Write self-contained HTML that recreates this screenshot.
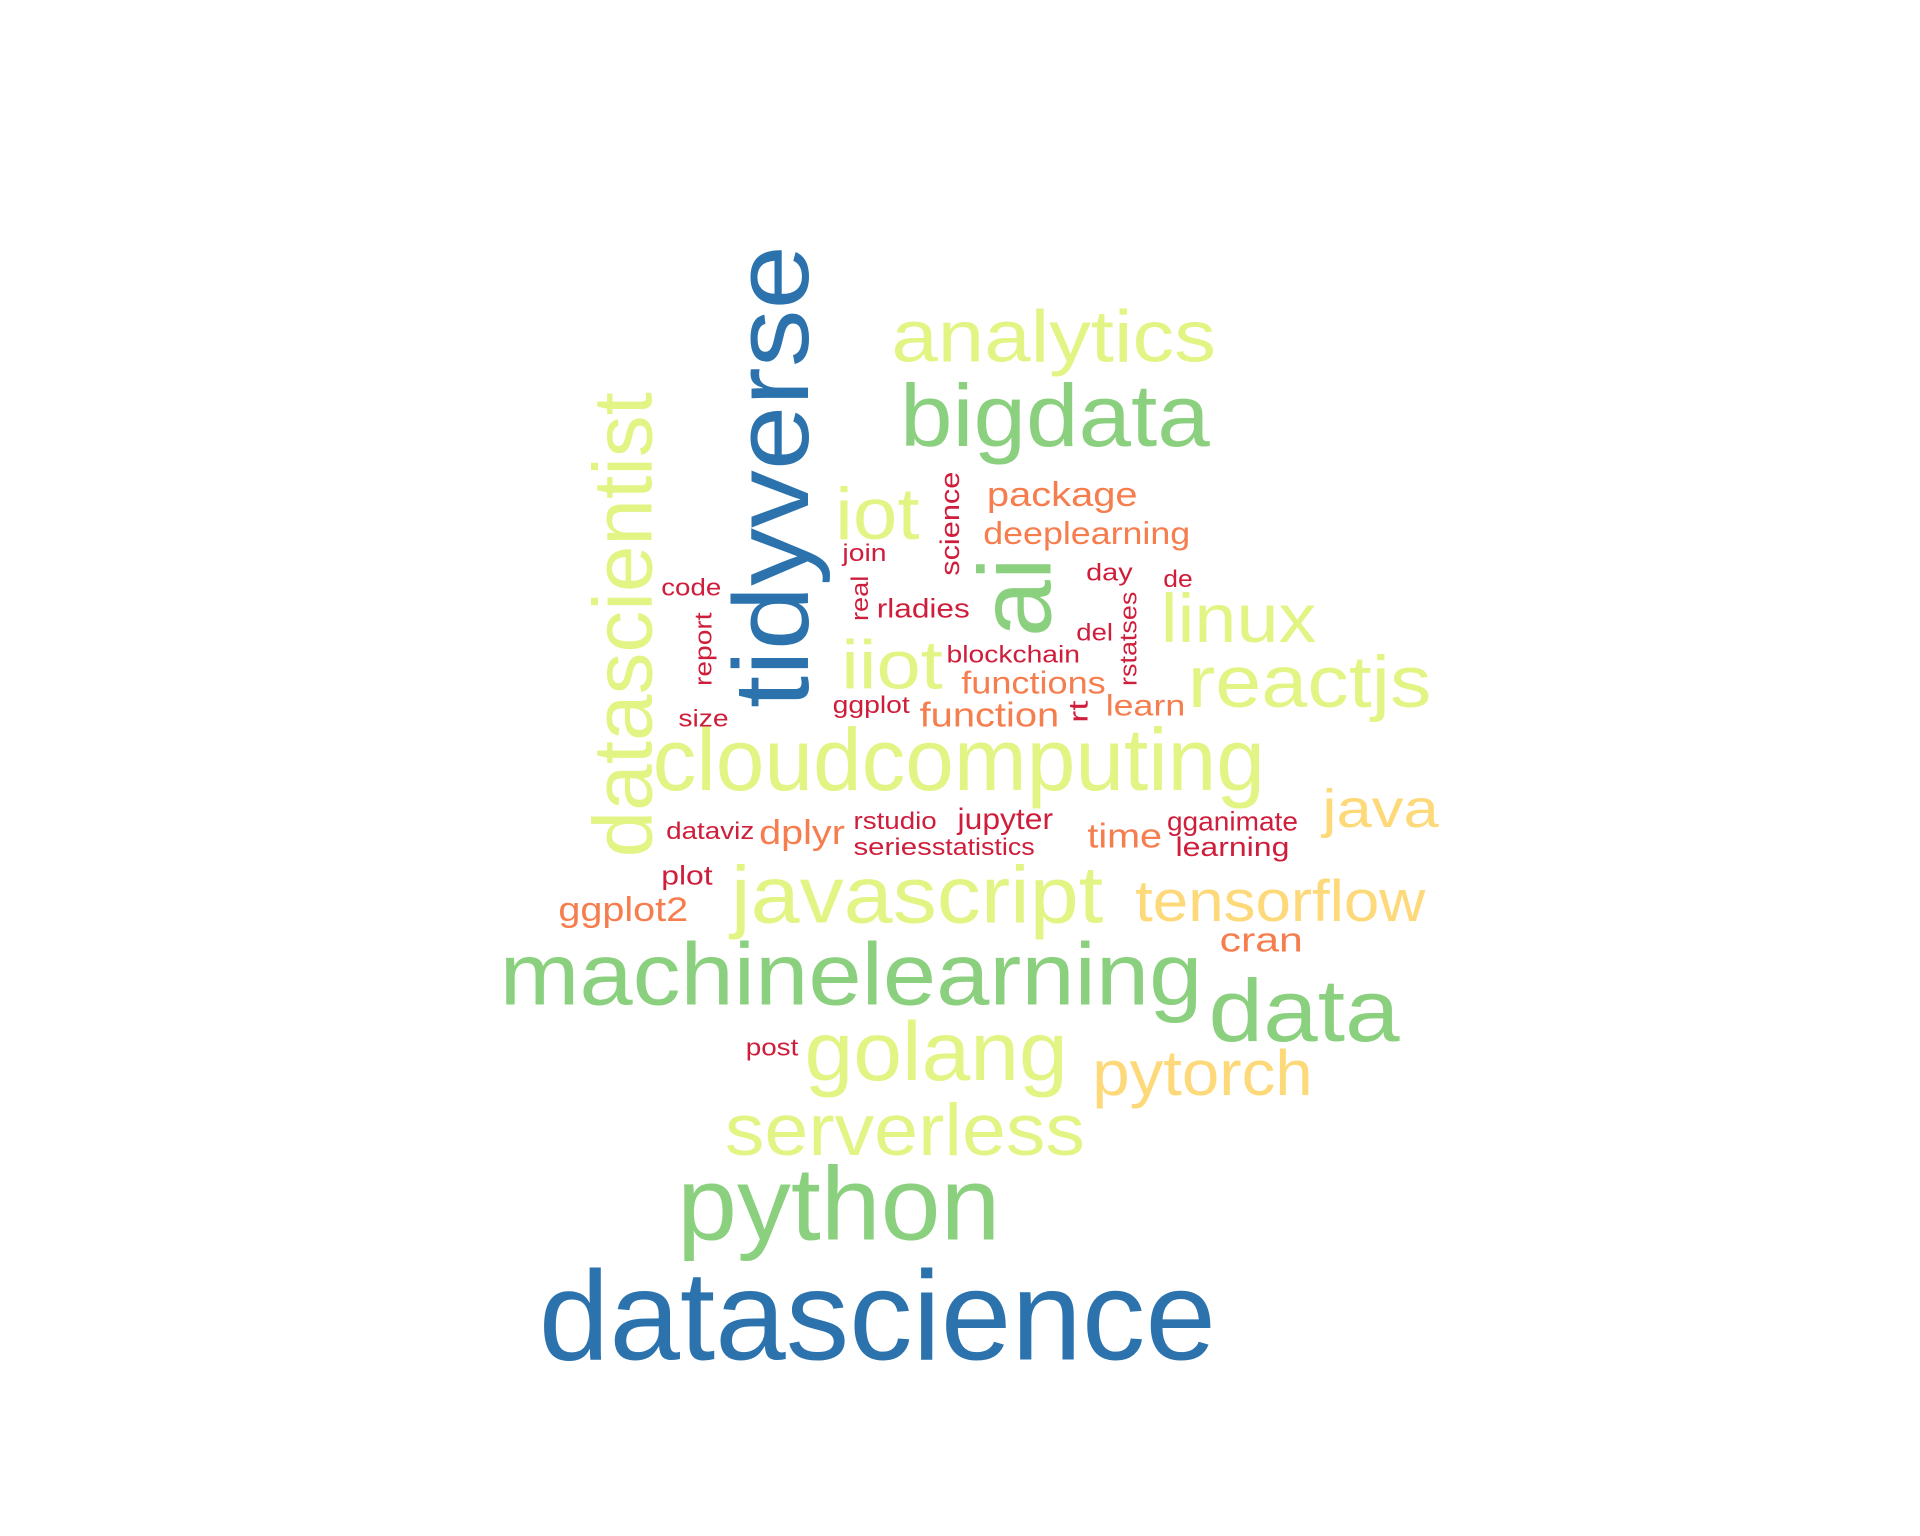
<!DOCTYPE html>
<html><head><meta charset="utf-8"><style>html,body{margin:0;padding:0;background:#fff}svg{display:block}text{font-family:"Liberation Sans",Arial,sans-serif}</style></head>
<body>
<svg width="1920" height="1536" viewBox="0 0 1568 1254" xmlns="http://www.w3.org/2000/svg">
<g>
<!-- blue -->
<text x="440" y="1110" font-size="104" fill="#2c73ae" textLength="553" lengthAdjust="spacingAndGlyphs">datascience</text>
<text transform="translate(660,578) rotate(-90)" font-size="87" fill="#2c73ae" textLength="378" lengthAdjust="spacingAndGlyphs">tidyverse</text>
<!-- green -->
<text x="553" y="1012" font-size="85" fill="#8bd07f" textLength="264" lengthAdjust="spacingAndGlyphs">python</text>
<text x="987" y="850" font-size="72" fill="#8bd07f" textLength="156" lengthAdjust="spacingAndGlyphs">data</text>
<text x="408" y="820" font-size="72" fill="#8bd07f" textLength="574" lengthAdjust="spacingAndGlyphs">machinelearning</text>
<text x="735" y="364" font-size="72" fill="#8bd07f" textLength="253" lengthAdjust="spacingAndGlyphs">bigdata</text>
<text transform="translate(858,520) rotate(-90)" font-size="84" fill="#8bd07f" textLength="65" lengthAdjust="spacingAndGlyphs">ai</text>
<!-- light yellow-green -->
<text x="592" y="943" font-size="60" fill="#e2f484" textLength="294" lengthAdjust="spacingAndGlyphs">serverless</text>
<text x="657" y="882" font-size="68" fill="#e2f484" textLength="215" lengthAdjust="spacingAndGlyphs">golang</text>
<text x="597" y="753" font-size="66" fill="#e2f484" textLength="304" lengthAdjust="spacingAndGlyphs">javascript</text>
<text x="533" y="645" font-size="72" fill="#e2f484" textLength="500" lengthAdjust="spacingAndGlyphs">cloudcomputing</text>
<text x="970" y="577" font-size="60" fill="#e2f484" textLength="199" lengthAdjust="spacingAndGlyphs">reactjs</text>
<text x="687" y="562" font-size="56" fill="#e2f484" textLength="83" lengthAdjust="spacingAndGlyphs">iiot</text>
<text x="948" y="524" font-size="56" fill="#e2f484" textLength="127" lengthAdjust="spacingAndGlyphs">linux</text>
<text x="682" y="440" font-size="60" fill="#e2f484" textLength="69" lengthAdjust="spacingAndGlyphs">iot</text>
<text x="728" y="295" font-size="60" fill="#e2f484" textLength="265" lengthAdjust="spacingAndGlyphs">analytics</text>
<text transform="translate(532,700) rotate(-90)" font-size="68" fill="#e2f484" textLength="380" lengthAdjust="spacingAndGlyphs">datascientist</text>
<!-- yellow-orange -->
<text x="892" y="894" font-size="52" fill="#fdd97a" textLength="180" lengthAdjust="spacingAndGlyphs">pytorch</text>
<text x="927" y="752" font-size="48" fill="#fdd97a" textLength="237" lengthAdjust="spacingAndGlyphs">tensorflow</text>
<text x="1080" y="675" font-size="44" fill="#fdd97a" textLength="95" lengthAdjust="spacingAndGlyphs">java</text>
<!-- orange -->
<text x="996" y="777" font-size="28" fill="#f67d4e" textLength="68" lengthAdjust="spacingAndGlyphs">cran</text>
<text x="456" y="752" font-size="28" fill="#f67d4e" textLength="106" lengthAdjust="spacingAndGlyphs">ggplot2</text>
<text x="620" y="689" font-size="28" fill="#f67d4e" textLength="70" lengthAdjust="spacingAndGlyphs">dplyr</text>
<text x="888" y="692" font-size="28" fill="#f67d4e" textLength="61" lengthAdjust="spacingAndGlyphs">time</text>
<text x="751" y="593" font-size="28" fill="#f67d4e" textLength="114" lengthAdjust="spacingAndGlyphs">function</text>
<text x="903" y="584" font-size="24" fill="#f67d4e" textLength="65" lengthAdjust="spacingAndGlyphs">learn</text>
<text x="785" y="566" font-size="26" fill="#f67d4e" textLength="118" lengthAdjust="spacingAndGlyphs">functions</text>
<text x="803" y="444" font-size="26" fill="#f67d4e" textLength="169" lengthAdjust="spacingAndGlyphs">deeplearning</text>
<text x="806" y="413" font-size="28" fill="#f67d4e" textLength="123" lengthAdjust="spacingAndGlyphs">package</text>
<!-- red -->
<text x="609" y="862" font-size="20" fill="#cf1e3c" textLength="43" lengthAdjust="spacingAndGlyphs">post</text>
<text x="540" y="722" font-size="22" fill="#cf1e3c" textLength="42" lengthAdjust="spacingAndGlyphs">plot</text>
<text x="544" y="685" font-size="20" fill="#cf1e3c" textLength="72" lengthAdjust="spacingAndGlyphs">dataviz</text>
<text x="697" y="677" font-size="20" fill="#cf1e3c" textLength="68" lengthAdjust="spacingAndGlyphs">rstudio</text>
<text x="697" y="698" font-size="20" fill="#cf1e3c" textLength="64" lengthAdjust="spacingAndGlyphs">series</text>
<text x="761" y="698" font-size="20" fill="#cf1e3c" textLength="84" lengthAdjust="spacingAndGlyphs">statistics</text>
<text x="782" y="677" font-size="24" fill="#cf1e3c" textLength="78" lengthAdjust="spacingAndGlyphs">jupyter</text>
<text x="953" y="678" font-size="22" fill="#cf1e3c" textLength="107" lengthAdjust="spacingAndGlyphs">gganimate</text>
<text x="960" y="699" font-size="22" fill="#cf1e3c" textLength="93" lengthAdjust="spacingAndGlyphs">learning</text>
<text x="554" y="593" font-size="20" fill="#cf1e3c" textLength="41" lengthAdjust="spacingAndGlyphs">size</text>
<text x="680" y="582" font-size="20" fill="#cf1e3c" textLength="63" lengthAdjust="spacingAndGlyphs">ggplot</text>
<text x="773" y="541" font-size="20" fill="#cf1e3c" textLength="109" lengthAdjust="spacingAndGlyphs">blockchain</text>
<text x="879" y="523" font-size="20" fill="#cf1e3c" textLength="30" lengthAdjust="spacingAndGlyphs">del</text>
<text x="716" y="504" font-size="22" fill="#cf1e3c" textLength="76" lengthAdjust="spacingAndGlyphs">rladies</text>
<text x="540" y="486" font-size="20" fill="#cf1e3c" textLength="49" lengthAdjust="spacingAndGlyphs">code</text>
<text x="887" y="474" font-size="20" fill="#cf1e3c" textLength="38" lengthAdjust="spacingAndGlyphs">day</text>
<text x="950" y="479" font-size="20" fill="#cf1e3c" textLength="24" lengthAdjust="spacingAndGlyphs">de</text>
<text x="688" y="458" font-size="20" fill="#cf1e3c" textLength="36" lengthAdjust="spacingAndGlyphs">join</text>
<text transform="translate(783,470) rotate(-90)" font-size="22" fill="#cf1e3c" textLength="85" lengthAdjust="spacingAndGlyphs">science</text>
<text transform="translate(709,507) rotate(-90)" font-size="20" fill="#cf1e3c" textLength="37" lengthAdjust="spacingAndGlyphs">real</text>
<text transform="translate(581,560) rotate(-90)" font-size="20" fill="#cf1e3c" textLength="60" lengthAdjust="spacingAndGlyphs">report</text>
<text transform="translate(928,560) rotate(-90)" font-size="20" fill="#cf1e3c" textLength="77" lengthAdjust="spacingAndGlyphs">rstatses</text>
<text transform="translate(888,590) rotate(-90)" font-size="22" fill="#cf1e3c" textLength="18" lengthAdjust="spacingAndGlyphs">rt</text>
</g>
</svg>
</body></html>
